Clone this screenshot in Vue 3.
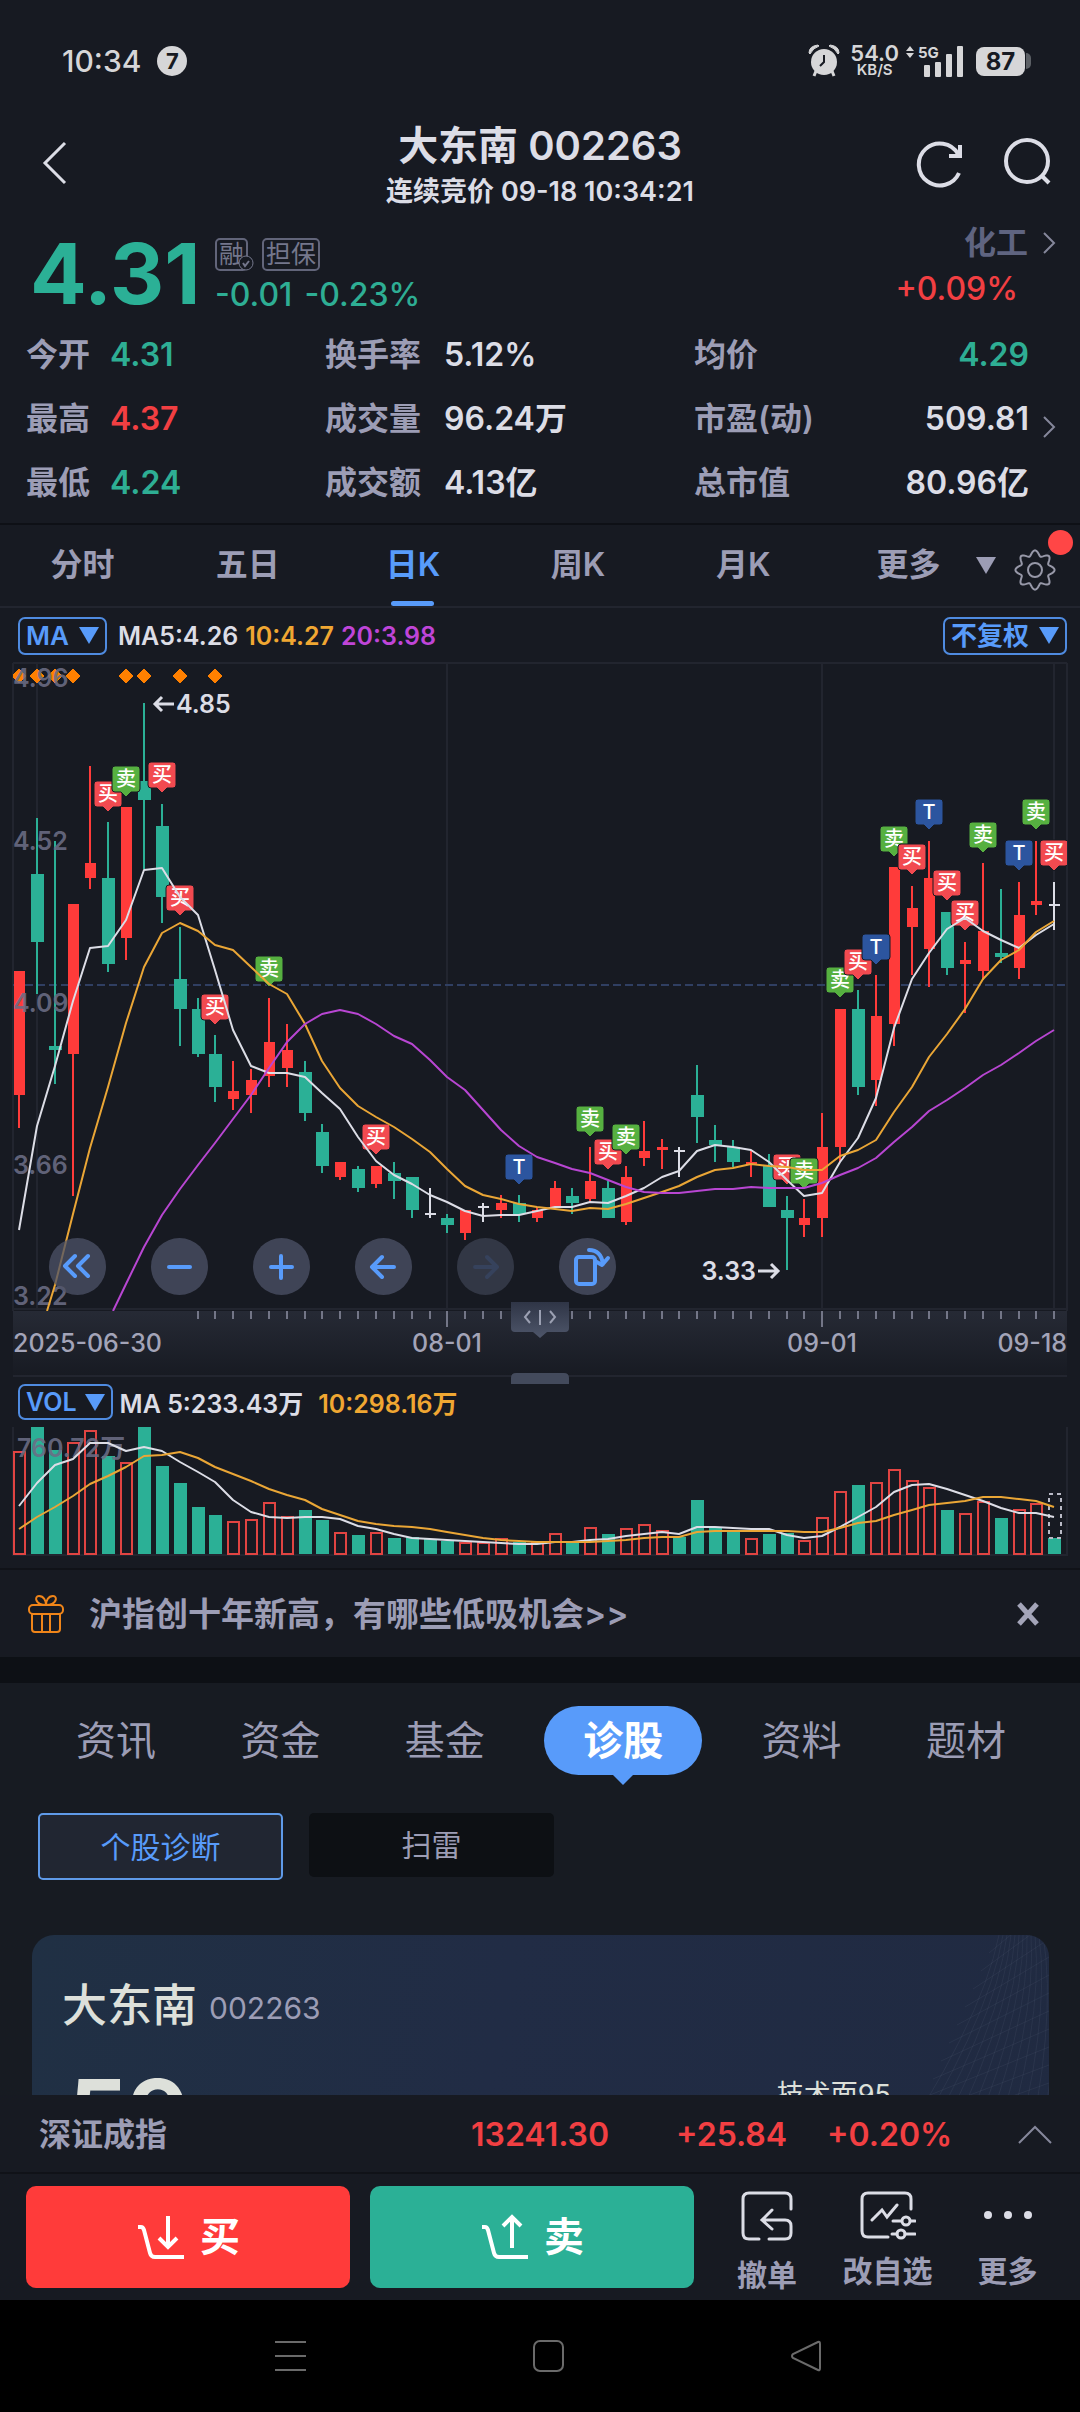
<script setup>
const stats = [
  [['今开', '4.31', 'down'], ['换手率', '5.12%', ''], ['均价', '4.29', 'down']],
  [['最高', '4.37', 'up'], ['成交量', '96.24万', ''], ['市盈(动)', '509.81', '']],
  [['最低', '4.24', 'down'], ['成交额', '4.13亿', ''], ['总市值', '80.96亿', '']],
]
const periods = ['分时', '五日', '日K', '周K', '月K', '更多']
const sections = ['资讯', '资金', '基金', '诊股', '资料', '题材']

const STEP = 17.85
const cx = (i) => Math.round(19 + STEP * i)

// colour, high, body top, body bottom, low
const candles = [
  ['r', 971, 971, 1095, 1128], ['g', 818, 874, 942, 994], ['g', 841, 1046, 1050, 1084], ['r', 904, 904, 1054, 1196],
  ['r', 766, 863, 878, 889], ['g', 822, 878, 964, 972], ['r', 807, 807, 938, 960], ['g', 703, 781, 800, 869],
  ['g', 804, 826, 897, 923], ['g', 927, 979, 1009, 1046], ['g', 998, 1009, 1054, 1057], ['g', 1035, 1054, 1087, 1102],
  ['r', 1061, 1091, 1099, 1110], ['r', 1069, 1080, 1095, 1113], ['r', 998, 1042, 1076, 1087], ['r', 1024, 1050, 1068, 1087],
  ['g', 1061, 1072, 1113, 1121], ['g', 1124, 1132, 1166, 1173], ['r', 1162, 1162, 1177, 1180], ['g', 1166, 1169, 1188, 1192],
  ['r', 1166, 1166, 1184, 1188], ['g', 1162, 1173, 1181, 1199], ['g', 1177, 1177, 1210, 1218], ['w', 1188, 1213, 1215, 1218],
  ['g', 1214, 1218, 1225, 1233], ['r', 1210, 1210, 1233, 1240], ['w', 1203, 1206, 1208, 1222], ['r', 1195, 1203, 1210, 1218],
  ['g', 1195, 1203, 1214, 1222], ['r', 1207, 1210, 1218, 1222], ['r', 1181, 1188, 1208, 1208], ['g', 1188, 1196, 1203, 1214],
  ['r', 1147, 1181, 1199, 1202], ['g', 1181, 1188, 1218, 1218], ['r', 1166, 1177, 1222, 1225], ['r', 1121, 1151, 1158, 1166],
  ['r', 1139, 1147, 1150, 1169], ['w', 1147, 1150, 1152, 1177], ['g', 1065, 1095, 1117, 1143], ['g', 1125, 1140, 1145, 1162],
  ['g', 1140, 1147, 1162, 1167], ['r', 1151, 1162, 1164, 1177], ['g', 1154, 1166, 1207, 1207], ['g', 1196, 1210, 1218, 1270],
  ['r', 1199, 1218, 1225, 1237], ['r', 1113, 1147, 1218, 1237], ['r', 1009, 1009, 1147, 1162], ['g', 990, 1009, 1087, 1095],
  ['r', 975, 1016, 1080, 1106], ['r', 867, 867, 1024, 1046], ['r', 886, 908, 927, 975], ['r', 841, 878, 949, 987],
  ['g', 912, 912, 968, 975], ['r', 942, 960, 964, 1013], ['r', 863, 931, 971, 980], ['g', 889, 953, 957, 963],
  ['r', 882, 915, 968, 979], ['r', 841, 901, 905, 915], ['w', 882, 904, 906, 930],
]
const ma5 = [1230, 1126, 1066, 1001, 948, 946, 920, 870, 868, 897, 915, 970, 1030, 1066, 1073, 1073, 1077, 1093, 1109, 1137, 1161, 1175, 1184, 1195, 1202, 1211, 1216, 1215, 1215, 1211, 1207, 1207, 1202, 1203, 1196, 1188, 1177, 1171, 1151, 1145, 1147, 1150, 1162, 1180, 1196, 1193, 1162, 1138, 1098, 1028, 979, 953, 929, 918, 931, 940, 948, 935, 924]
const ma10 = [1285, 1214, 1148, 1087, 1023, 967, 933, 923, 931, 945, 950, 967, 984, 994, 1024, 1061, 1088, 1106, 1117, 1127, 1139, 1152, 1169, 1186, 1195, 1199, 1204, 1207, 1209, 1211, 1208, 1209, 1204, 1198, 1192, 1186, 1177, 1170, 1168, 1164, 1166, 1167, 1170, 1170, 1156, 1150, 1140, 1112, 1087, 1057, 1034, 1009, 979, 960, 950, 932, 921]
const ma20 = [1284, 1247, 1215, 1189, 1165, 1143, 1119, 1095, 1068, 1042, 1024, 1014, 1010, 1014, 1024, 1036, 1044, 1060, 1077, 1090, 1110, 1130, 1146, 1157, 1163, 1169, 1173, 1180, 1187, 1192, 1193, 1193, 1191, 1189, 1189, 1187, 1188, 1188, 1188, 1183, 1175, 1168, 1158, 1142, 1127, 1111, 1100, 1088, 1075, 1065, 1053, 1041, 1030]
const line = (values, start = 0) => values.map((y, k) => `${cx(k + start)},${y}`).join(' ')

const marks = [
  [5, 781, '买'], [6, 766, '卖'], [8, 762, '买'], [9, 885, '买'], [11, 994, '买'], [14, 956, '卖'], [20, 1124, '买'],
  [28, 1154, 'T'], [32, 1106, '卖'], [33, 1139, '买'], [34, 1124, '卖'], [43, 1154, '买'], [44, 1158, '卖'],
  [46, 967, '卖'], [47, 949, '买'], [48, 934, 'T'], [49, 826, '卖'], [50, 844, '买'], [51, 799, 'T'], [52, 870, '买'],
  [53, 900, '买'], [54, 822, '卖'], [56, 840, 'T'], [57, 799, '卖'], [58, 840, '买'],
]
const markClass = { 买: 'buy', 卖: 'sell', T: 'both' }
const events = [0, 1, 2, 3, 6, 7, 9, 11]
const prices = [['4.96', 687], ['4.52', 850], ['4.09', 1012], ['3.66', 1174], ['3.22', 1305]]
const ticks = Array.from({ length: 49 }, (_, k) => k + 10)

const VOL_BASE = 1554
const volumes = 'r1452 g1427 g1450 r1443 r1431 g1456 r1463 g1427 g1466 g1483 g1507 g1515 r1522 r1520 r1503 r1517 g1510 g1520 r1533 g1535 r1533 g1538 g1537 g1539 g1541 r1543 r1543 r1539 g1542 r1543 r1534 g1541 r1528 g1534 r1529 r1525 r1531 g1537 g1500 g1527 g1531 r1539 g1534 g1533 r1541 r1518 r1492 g1485 r1483 r1470 r1481 r1488 g1510 r1514 r1502 g1518 r1510 r1504 g1538'
  .split(' ').map((s) => [s[0], Number(s.slice(1))])
const vol5 = [1506, 1483, 1465, 1459, 1443, 1443, 1451, 1447, 1451, 1462, 1472, 1482, 1500, 1512, 1517, 1518, 1517, 1517, 1519, 1526, 1529, 1534, 1538, 1539, 1540, 1541, 1542, 1543, 1544, 1544, 1542, 1542, 1540, 1539, 1536, 1534, 1532, 1534, 1527, 1527, 1528, 1529, 1529, 1535, 1538, 1536, 1527, 1517, 1507, 1492, 1485, 1484, 1489, 1495, 1501, 1508, 1513, 1513, 1517]
const vol10 = [1529, 1517, 1507, 1496, 1484, 1476, 1467, 1456, 1455, 1452, 1458, 1467, 1474, 1481, 1489, 1495, 1500, 1509, 1515, 1521, 1524, 1526, 1527, 1529, 1532, 1535, 1538, 1540, 1541, 1542, 1542, 1542, 1542, 1541, 1540, 1538, 1537, 1537, 1532, 1531, 1531, 1531, 1531, 1531, 1532, 1532, 1528, 1523, 1521, 1515, 1510, 1505, 1503, 1501, 1497, 1497, 1499, 1501, 1507]

const gear = Array.from({ length: 96 }, (_, k) => {
  const a = (k / 96) * Math.PI * 2
  const r = 17 + 2.6 * Math.cos(8 * a)
  return `${(21 + r * Math.cos(a)).toFixed(1)},${(21 + r * Math.sin(a)).toFixed(1)}`
}).join(' ')
const mesh = Array.from({ length: 13 }, (_, k) => k)
</script>

<template>
  <div class="app">
    <div class="status">
      <span class="clock">10:34</span>
      <span class="notice">7</span>
      <span class="grow"></span>
      <svg class="alarm" width="32" height="36" viewBox="0 0 32 36">
        <circle cx="16" cy="19" r="13" fill="#d6d6d8" />
        <path d="M1 10 Q1 3 10 2 L11 3 Q5 5 2 11 Z M31 10 Q31 3 22 2 L21 3 Q27 5 30 11 Z" fill="#d6d6d8" stroke="#d6d6d8" stroke-width="1" />
        <path d="M8 28 L6 33 M24 28 L26 33" stroke="#d6d6d8" stroke-width="3" />
        <path d="M16 12 V19 L12 23" stroke="#171a22" stroke-width="2" fill="none" />
      </svg>
      <span class="speed"><b>54.0</b><i>KB/S</i></span>
      <svg class="signal" width="60" height="34" viewBox="0 0 60 34" fill="#d6d6d8">
        <path d="M2 7 L6 2 L10 7 Z M2 9 L6 14 L10 9 Z" />
        <rect x="20" y="21" width="6" height="12" rx="1" />
        <rect x="31" y="18" width="6" height="15" rx="1" />
        <rect x="42" y="10" width="6" height="23" rx="1" />
        <rect x="53" y="2" width="6" height="31" rx="1" />
        <text x="14" y="14" class="net">5G</text>
      </svg>
      <span class="battery">87</span><span class="nub"></span>
    </div>

    <header class="head">
      <button class="icon-btn back" aria-label="返回">
        <svg width="26" height="44" viewBox="0 0 26 44"><path d="M23 2 L3 22 L23 42" /></svg>
      </button>
      <div class="title">
        <h1>大东南 002263</h1>
        <p>连续竞价 09-18 10:34:21</p>
      </div>
      <div class="tools">
        <button class="icon-btn" aria-label="刷新">
          <svg width="48" height="50" viewBox="0 0 48 50"><path d="M44 35 A21 21 0 1 1 43 16 L45 18 M45 7 V18 H34" /></svg>
        </button>
        <button class="icon-btn" aria-label="搜索">
          <svg width="48" height="50" viewBox="0 0 48 50"><circle cx="24" cy="23" r="21" /><path d="M38 37 L46 45" /></svg>
        </button>
      </div>
    </header>

    <section class="quote">
      <div class="top">
        <strong class="price">4.31</strong>
        <div class="delta">
          <div class="tags">
            <span class="tag">融<svg class="check" width="16" height="16" viewBox="0 0 16 16"><circle cx="8" cy="8" r="7" fill="#171a22" stroke="#74778c" stroke-width="1" /><path d="M5 8 L7 11 L11 6" fill="none" stroke="#74778c" stroke-width="2" /></svg></span>
            <span class="tag">担保</span>
          </div>
          <div class="change down"><span>-0.01</span><span>-0.23%</span></div>
        </div>
        <div class="sector">
          <a href="#">化工<svg width="14" height="24" viewBox="0 0 14 24"><path d="M2 2 L12 12 L2 22" /></svg></a>
          <span class="up">+0.09%</span>
        </div>
      </div>
      <div class="stats">
        <div v-for="(row, r) in stats" :key="r" class="row">
          <div v-for="(s, c) in row" :key="s[0]" class="stat" :class="'c' + c">
            <span class="k">{{ s[0] }}</span><span :class="s[2]">{{ s[1] }}</span>
          </div>
        </div>
        <svg class="more" width="14" height="24" viewBox="0 0 14 24"><path d="M2 2 L12 12 L2 22" /></svg>
      </div>
    </section>

    <nav class="periods">
      <button v-for="p in periods" :key="p" :class="{ on: p === '日K' }">{{ p }}</button>
      <i class="caret"></i>
      <button class="settings" aria-label="设置">
        <svg width="42" height="42" viewBox="0 0 42 42" fill="none" stroke="#9798a8" stroke-width="2">
          <polygon :points="gear" /><circle cx="21" cy="21" r="7" />
        </svg>
        <i class="dot"></i>
      </button>
    </nav>

    <section class="chart">
      <div class="bar">
        <button class="pick">MA <i></i></button>
        <span>MA5:4.26</span><span class="o">10:4.27</span><span class="p">20:3.98</span>
        <button class="pick last">不复权 <i></i></button>
      </div>
      <div class="plot">
        <svg viewBox="0 663 1080 714">
          <defs>
            <linearGradient id="axis" x1="0" y1="0" x2="0" y2="1">
              <stop offset="0" stop-color="#262a35" /><stop offset="1" stop-color="#171a22" />
            </linearGradient>
            <linearGradient id="grip" x1="0" y1="0" x2="0" y2="1">
              <stop offset="0" stop-color="#2f3546" /><stop offset="1" stop-color="#4e566a" />
            </linearGradient>
            <clipPath id="area"><rect x="13" y="663" width="1054" height="648" /></clipPath>
          </defs>
          <path class="grid" d="M13 663 H1067 M13 663 V1311 M37 663 V1308 M447 663 V1308 M822 663 V1308 M1054 663 V1308 M1067 663 V1311 M13 1309 H1067" />
          <line class="ref" x1="13" y1="985" x2="1067" y2="985" />
          <g clip-path="url(#area)">
            <path v-for="e in events" :key="e" :d="`M${cx(e)} 669 l7 7 l-7 7 l-7 -7 Z`" class="event" />
            <g v-for="(c, i) in candles" :key="i" :class="c[0]">
              <rect :x="cx(i) - 1" :y="c[1]" width="2" :height="c[4] - c[1]" />
              <rect :x="cx(i) - (c[0] === 'g' ? 6 : 5)" :y="c[2]" :width="c[0] === 'g' ? 13 : 11" :height="c[3] - c[2]" />
            </g>
            <g v-for="m in marks" :key="m[0]" :class="markClass[m[2]]">
              <path :d="`M${cx(m[0]) - 11} ${m[1]} h22 q3 0 3 3 v20 q0 3 -3 3 h-6 l-5 5 l-5 -5 h-6 q-3 0 -3 -3 v-20 q0 -3 3 -3 Z`" />
              <text :x="cx(m[0])" :y="m[1] + 20">{{ m[2] }}</text>
            </g>
            <text v-for="p in prices" :key="p[0]" class="scale" x="13" :y="p[1]">{{ p[0] }}</text>
            <polyline class="ma w5" :points="line(ma5)" />
            <polyline class="ma w10" :points="'47,1311 ' + line(ma10, 2)" />
            <polyline class="ma w20" :points="'113,1311 ' + line(ma20, 6)" />
          </g>
          <path class="arrow" d="M174 704 H155 M162 697 L155 704 L162 711 M758 1271 H778 M771 1264 L778 1271 L771 1278" />
          <text class="peak" x="176" y="713">4.85</text>
          <text class="peak" x="756" y="1280" text-anchor="end">3.33</text>
          <rect x="13" y="1311" width="1054" height="66" fill="url(#axis)" />
          <line v-for="t in ticks" :key="t" class="tick" :x1="cx(t)" :x2="cx(t)" y1="1311" :y2="t === 24 || t === 45 ? 1327 : 1319" />
          <text class="date" x="13" y="1352">2025-06-30</text>
          <text class="date" x="447" y="1352" text-anchor="middle">08-01</text>
          <text class="date" x="822" y="1352" text-anchor="middle">09-01</text>
          <text class="date" x="1067" y="1352" text-anchor="end">09-18</text>
          <path class="grid" d="M13 1376 H1067" />
          <path d="M511 1302 H569 V1328 Q569 1332 565 1332 H547 L540 1338 L533 1332 H515 Q511 1332 511 1328 Z" fill="url(#grip)" />
          <path d="M530 1311 L525 1317 L530 1323 M540 1310 V1325 M550 1311 L555 1317 L550 1323" fill="none" stroke="#9ba0b2" stroke-width="2" />
          <path d="M511 1384 V1378 Q511 1373 516 1373 H564 Q569 1373 569 1378 V1384 Z" fill="#434a5c" />
        </svg>
        <div class="pad">
          <button aria-label="最早"><svg viewBox="0 0 57 57"><path d="M26 18 L16 28 L26 38 M39 18 L29 28 L39 38" /></svg></button>
          <button aria-label="缩小"><svg viewBox="0 0 57 57"><path d="M18 29 H39" /></svg></button>
          <button aria-label="放大"><svg viewBox="0 0 57 57"><path d="M18 29 H39 M28 18 V40" /></svg></button>
          <button aria-label="左移"><svg viewBox="0 0 57 57"><path d="M39 29 H17 M27 19 L17 29 L27 39" /></svg></button>
          <button aria-label="右移" disabled><svg viewBox="0 0 57 57"><path d="M18 29 H40 M30 19 L40 29 L30 39" /></svg></button>
          <button aria-label="横屏"><svg viewBox="0 0 57 57"><rect x="17" y="19" width="19" height="27" rx="3" /><path d="M30 12 Q42 12 44 26 M36 23 L43 27 L49 20" /></svg></button>
        </div>
      </div>

      <div class="bar vol">
        <button class="pick">VOL <i></i></button>
        <span>MA 5:233.43万</span><span class="o wide">10:298.16万</span>
      </div>
      <svg viewBox="0 1427 1080 141">
        <path class="grid" d="M13 1427 V1555 H1067 V1427" />
        <g v-for="(v, i) in volumes" :key="i">
          <rect v-if="v[0] === 'g'" class="g" :x="cx(i) - 6" :y="v[1]" width="13" :height="VOL_BASE - v[1]" />
          <rect v-else class="hollow" :x="cx(i) - 5" :y="v[1]" width="11" :height="VOL_BASE - v[1]" />
        </g>
        <rect x="1049" y="1494" width="12" height="44" fill="none" stroke="#b9bac6" stroke-width="2" stroke-dasharray="4 4" />
        <text class="scale" x="17" y="1457">760.72万</text>
        <polyline class="ma w5" :points="line(vol5)" />
        <polyline class="ma w10" :points="line(vol10)" />
      </svg>
    </section>

    <div class="promo">
      <svg width="38" height="40" viewBox="0 0 38 40" fill="none" stroke="#f08519" stroke-width="2">
        <rect x="2" y="11" width="34" height="9" rx="4" />
        <path d="M5 20 V35 Q5 38 8 38 H30 Q33 38 33 35 V20 M15 20 V38 M23 20 V38 M19 11 C8 11 7 2 12 2 C17 2 19 7 19 11 C19 7 21 2 26 2 C31 2 30 11 19 11" />
      </svg>
      <a href="#">沪指创十年新高，有哪些低吸机会&gt;&gt;</a>
      <button aria-label="关闭"><svg width="24" height="26" viewBox="0 0 24 26"><path d="M3 3 L21 23 M21 3 L3 23" stroke="#a3a4b8" stroke-width="5" /></svg></button>
    </div>

    <main class="body">
      <nav class="sections">
        <button v-for="s in sections" :key="s" :class="{ on: s === '诊股' }">{{ s }}</button>
      </nav>
      <div class="modes">
        <button class="on">个股诊断</button>
        <button>扫雷</button>
      </div>
      <article class="card">
        <svg class="mesh" width="160" height="240" viewBox="0 0 160 240" fill="none" stroke="#8fa0b0" stroke-opacity="0.09">
          <path v-for="m in mesh" :key="m" :d="`M${110 + m * 4} 0 Q${92 + m * 7} 90 ${m * 13 - 10} 240`" />
          <path v-for="m in mesh" :key="'b' + m" :d="`M${108 - m * 8} ${m * 18} L160 ${m * 18 - 50}`" />
        </svg>
        <h2>大东南 <small>002263</small></h2>
        <div class="score"><strong>59</strong><span>技术面95</span></div>
      </article>
    </main>

    <footer class="dock">
      <div class="index">
        <span class="k">深证成指</span><span>13241.30</span><span>+25.84</span><span>+0.20%</span>
        <svg width="36" height="20" viewBox="0 0 36 20"><path d="M2 18 L18 2 L34 18" /></svg>
      </div>
      <div class="actions">
        <button class="trade r-bg">
          <svg width="50" height="46" viewBox="0 0 50 46"><path d="M2 13 H5 Q7 13 8 16 L14 39 Q15 43 19 43 H48 M32 2 V33 M23 24 L32 33 L41 24" /></svg>买
        </button>
        <button class="trade g-bg">
          <svg width="50" height="46" viewBox="0 0 50 46"><path d="M2 13 H5 Q7 13 8 16 L14 39 Q15 43 19 43 H48 M32 34 V3 M23 12 L32 3 L41 12" /></svg>卖
        </button>
        <button class="tool t1">
          <svg width="52" height="50" viewBox="0 0 52 50"><path d="M50 18 V8 Q50 2 44 2 H8 Q2 2 2 8 V42 Q2 48 8 48 H18 M28 48 H44 Q50 48 50 42 V35 Q50 29 44 29 H22 M31 19 L21 29 L31 38" /></svg>
          撤单
        </button>
        <button class="tool t2">
          <svg width="56" height="50" viewBox="0 0 56 50"><path d="M51 18 V8 Q51 2 45 2 H8 Q2 2 2 8 V40 Q2 46 8 46 H28 M12 29 L22 19 L27 26 L37 14 M33 30 H41 M51 30 H55 M32 43 H37 M45 43 H55" /><circle cx="46" cy="30" r="4" /><circle cx="41" cy="43" r="4" /></svg>
          改自选
        </button>
        <button class="tool t3">
          <svg width="52" height="50" viewBox="0 0 52 50"><g fill="#dcdde6" stroke="none"><circle cx="6" cy="24" r="4" /><circle cx="26" cy="24" r="4" /><circle cx="46" cy="24" r="4" /></g></svg>
          更多
        </button>
      </div>
      <div class="system">
        <button aria-label="最近任务"><svg width="32" height="32" viewBox="0 0 32 32"><path d="M0 2 H31 M0 16 H31 M0 30 H31" /></svg></button>
        <button aria-label="主屏幕"><svg width="32" height="32" viewBox="0 0 32 32"><rect x="1" y="1" width="29" height="30" rx="6" /></svg></button>
        <button aria-label="后退"><svg width="32" height="32" viewBox="0 0 32 32"><path d="M28 2 Q30 1 30 4 V28 Q30 31 28 30 L3 18 Q1 16 3 14 Z" /></svg></button>
      </div>
    </footer>
  </div>
</template>

<style>
body { background: #171a22; }
</style>

<style scoped>
* { box-sizing: border-box; margin: 0; }
.app {
  display: flex; flex-direction: column; height: 100vh; overflow: hidden;
  background: #171a22; color: #dcdde6;
  font-family: Inter, "Noto Sans CJK SC", sans-serif; font-weight: 600; font-size: 32px; line-height: 40px;
}
button { font: inherit; color: inherit; background: none; border: 0; padding: 0; white-space: nowrap; }
a { color: inherit; text-decoration: none; }
i { font-style: normal; }
svg { flex: none; display: block; }
.status, .head, .quote, .periods, .chart, .promo, .dock { flex: none; }
.up { color: #f23f42; }
.down { color: #2eae94; }
.k { color: #9c9db5; }

.status { display: flex; align-items: center; height: 122px; padding: 0 49px 0 62px; color: #d6d6d8; font-size: 30px; }
.clock { font-weight: 500; }
.notice { width: 30px; height: 30px; margin-left: 16px; border-radius: 50%; background: #d6d6d8; color: #171a22; font-size: 22px; font-weight: 700; line-height: 30px; text-align: center; }
.grow { flex: 1; }
.speed { display: flex; flex-direction: column; align-items: center; margin: 0 5px 0 10px; }
.speed b { font-size: 22px; line-height: 18px; font-weight: 600; }
.speed i { font-size: 15px; line-height: 16px; font-weight: 600; }
.net { font-size: 15px; font-weight: 700; }
.battery { width: 49px; height: 29px; margin-left: 12px; border-radius: 8px; background: #d6d6d8; color: #171a22; font-size: 24px; font-weight: 700; line-height: 29px; text-align: center; }
.nub { width: 5px; height: 16px; margin-left: 1px; border-radius: 0 5px 5px 0; background: #5c6066; }

.head { display: grid; grid-template-columns: 1fr auto 1fr; align-items: center; height: 88px; padding: 0 29px; }
.title { text-align: center; }
.title h1 { font-size: 40px; font-weight: 600; line-height: 48px; }
.title p { margin-top: 4px; font-size: 27px; line-height: 36px; }
.tools { display: flex; justify-content: flex-end; gap: 40px; }
.icon-btn { padding-bottom: 6px; }
.icon-btn svg { fill: none; stroke: #dcdde6; stroke-width: 4; }
.icon-btn.back { justify-self: start; margin-left: 13px; }
.back svg { stroke-width: 3; }

.quote { padding: 10px 0 8px 26px; border-bottom: 2px solid #0e1016; }
.top { display: flex; height: 103px; }
.price { width: 189px; padding-left: 4px; color: #2bb096; font-size: 84px; font-weight: 700; line-height: 108px; }
.tags { display: flex; gap: 14px; margin-top: 18px; }
.tag { position: relative; height: 33px; padding: 0 2px; border: 2px solid #62657a; border-radius: 5px; color: #74778c; font-size: 25px; font-weight: 400; line-height: 29px; }
.check { position: absolute; right: -8px; bottom: -2px; }
.change { display: flex; gap: 12px; font-weight: 500; line-height: 48px; }
.sector { display: flex; flex-direction: column; align-items: flex-end; flex: 1; padding-right: 24px; line-height: 46px; }
.sector a { display: flex; align-items: center; gap: 14px; color: #5f6480; }
.sector .up { margin-right: 38px; font-weight: 500; }
.sector path, .more path { fill: none; stroke: #85879b; stroke-width: 2; }
.stats { position: relative; padding-right: 51px; }
.row { display: grid; grid-template-columns: 299fr 369fr 335fr; line-height: 64px; }
.stat { display: flex; white-space: nowrap; }
.c0 .k { width: 84px; }
.c1 .k { width: 119px; }
.c2 { justify-content: space-between; }
.more { position: absolute; right: 24px; top: 92px; }

.periods { display: flex; align-items: center; height: 83px; border-bottom: 2px solid #22252f; color: #9c9db5; }
.periods button { position: relative; flex: 165 1 0; height: 81px; padding-bottom: 2px; }
.periods .on { color: #589bfa; }
.periods .on::after { content: ""; position: absolute; left: 50%; bottom: 0; width: 43px; height: 5px; margin-left: -22px; border-radius: 3px; background: #589bfa; }
.periods .caret { margin-left: -15px; border: 10px solid transparent; border-top: 17px solid #9c9db5; border-bottom: 0; }
.periods .settings { display: flex; flex: 0 0 42px; align-items: center; margin: 10px 24px 0 18px; }
.dot { position: absolute; top: 0; right: -17px; width: 25px; height: 25px; border-radius: 50%; background: #ff4646; }

.bar { display: flex; align-items: center; gap: 7px; height: 55px; padding: 0 13px 0 18px; font-size: 25px; line-height: 32px; }
.pick { display: flex; align-items: center; gap: 10px; height: 38px; margin-right: 4px; padding: 0 6px; border: 2px solid #4f8be0; border-radius: 7px; color: #589bfa; font-size: 26px; }
.pick i { border: 10px solid transparent; border-top: 17px solid #589bfa; border-bottom: 0; }
.pick.last { margin: 0 0 0 auto; }
.vol { height: 50px; }
.vol .pick { height: 36px; margin-right: 0; gap: 8px; font-size: 25px; }
.vol span { padding-top: 4px; }
.o { color: #f0a732; }
.p { color: #bf45d8; }
.wide { margin-left: 8px; }
.plot { position: relative; }
.chart > svg, .plot > svg { width: 100%; height: auto; overflow: visible; }
.grid { fill: none; stroke: #22252f; stroke-width: 2; }
.ref { stroke: #303f62; stroke-width: 2; stroke-dasharray: 8 4; }
.event { fill: #ff8000; stroke: #ff8000; stroke-width: 1; stroke-linejoin: round; }
.r { fill: #ff3b3a; }
.g { fill: #2bb096; }
.w { fill: #dcdde6; }
.hollow { fill: #171a22; stroke: #e04442; stroke-width: 2; }
.buy path { fill: #f24a50; }
.sell path { fill: #56b040; }
.both path { fill: #2c559f; }
.buy path, .sell path, .both path { stroke: #171a22; stroke-width: 1; }
.buy text, .sell text, .both text { fill: #fff; font-size: 20px; font-weight: 500; text-anchor: middle; }
.scale { fill: #6b6d85; fill-opacity: 0.9; font-size: 25px; }
.ma { fill: none; stroke-width: 2; stroke-linejoin: round; }
.w5 { stroke: #dcdde6; }
.w10 { stroke: #eaa636; }
.w20 { stroke: #b846d2; }
.peak { fill: #dcdde6; font-size: 25px; }
.arrow { fill: none; stroke: #dcdde6; stroke-width: 3; }
.tick { stroke: #737687; stroke-width: 2; }
.date { fill: #a3a4b8; font-size: 25px; font-weight: 500; }
.pad { position: absolute; left: 49px; bottom: 82px; display: flex; gap: 45px; }
.pad button { width: 57px; height: 57px; border-radius: 50%; background: rgba(78, 83, 104, 0.75); }
.pad svg { fill: none; stroke: #589bfa; stroke-width: 4; stroke-linecap: round; stroke-linejoin: round; }
.pad button:disabled { background: rgba(78, 83, 104, 0.5); }
.pad button:disabled svg { stroke: #36425c; }

.promo { display: flex; align-items: center; height: 89px; padding: 0 40px 0 27px; border-top: 2px solid #101218; color: #9c9db5; font-size: 33px; }
.promo a { flex: 1; margin-left: 24px; }

.body { flex: 1; min-height: 0; overflow: hidden; border-top: 26px solid #0d1015; background: #171b22; }
.sections { display: flex; justify-content: space-between; padding: 23px 49px 0 51px; color: #9c9db5; font-size: 40px; font-weight: 400; }
.sections button { position: relative; height: 69px; padding: 0 25px; }
.sections .on { padding: 0 39px; border-radius: 35px; background: #589bfa; color: #fff; font-weight: 600; }
.sections .on::after { content: ""; position: absolute; left: 50%; top: 68px; margin-left: -11px; border: 11px solid transparent; border-top-color: #589bfa; border-bottom: 0; }
.modes { display: flex; gap: 26px; padding: 38px 38px 0; color: #9c9db5; font-size: 30px; font-weight: 400; }
.modes button { width: 245px; height: 64px; border-radius: 5px; background: #0d1014; }
.modes .on { height: 67px; border: 2px solid #5f9ae8; background: #212632; color: #589bfa; }
.card { position: relative; margin: 55px 31px 0 32px; padding: 44px 158px 80px 30px; overflow: hidden; border-radius: 22px; background: linear-gradient(100deg, #203044, #212c45 45%, #202a41); color: #dde0da; }
.mesh { position: absolute; right: 0; top: 0; }
.card h2 { font-size: 45px; font-weight: 500; line-height: 54px; }
.card small { color: #9c9db5; font-size: 30px; font-weight: 400; vertical-align: 3px; }
.score { display: flex; justify-content: space-between; margin-top: 22px; }
.score strong { padding-left: 6px; font-size: 94px; font-weight: 700; line-height: 112px; }
.score span { padding-top: 20px; font-size: 27px; font-weight: 400; line-height: 36px; }

.dock { background: #171a22; }
.index { display: grid; grid-template-columns: 432fr 205fr 151fr 190fr 36px; align-items: center; height: 77px; padding: 3px 27px 0 39px; color: #f23f42; }
.index path { fill: none; stroke: #85879b; stroke-width: 2; }
.actions { display: flex; height: 128px; padding: 12px 20px 0 26px; border-top: 2px solid #101218; }
.trade { display: flex; align-items: center; justify-content: center; flex: 324 1 0; height: 102px; margin-right: 20px; gap: 14px; border-radius: 10px; color: #fff; font-size: 40px; font-weight: 700; }
.trade svg { fill: none; stroke: #fff; stroke-width: 4; }
.r-bg { background: #ff3b3a; }
.g-bg { background: #2bb096; }
.tool { display: flex; flex-direction: column; align-items: center; padding-top: 5px; color: #9c9db5; font-size: 30px; line-height: 36px; gap: 12px; }
.tool svg { fill: none; stroke: #dcdde6; stroke-width: 3; stroke-linecap: round; }
.t1 { width: 106px; gap: 16px; }
.t2 { width: 135px; }
.t3 { width: 105px; }
.system { display: flex; align-items: center; height: 112px; padding: 0 258px 0 275px; justify-content: space-between; background: #000; }
.system svg { fill: none; stroke: #6a6a6a; stroke-width: 2; }
</style>
